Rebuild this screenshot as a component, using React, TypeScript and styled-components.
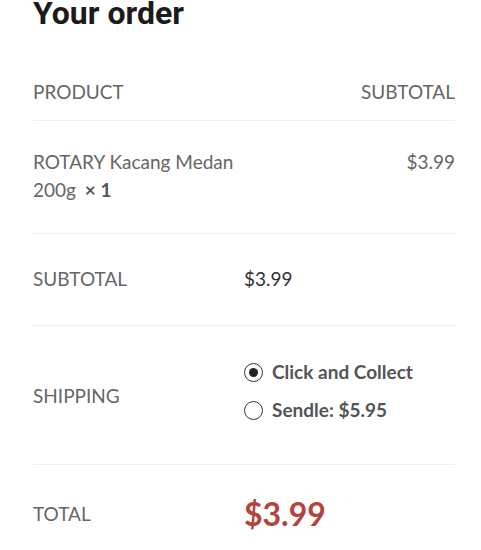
import React from "react";
import styled, { createGlobalStyle } from "styled-components";

const Global = createGlobalStyle`
  html, body { margin: 0; padding: 0; background: #ffffff; }
  body { font-family: Lato, "Noto Sans", sans-serif; overflow: hidden; }
`;

const Wrapper = styled.div`
  width: 422px;
  margin-left: 33px;
`;

const Title = styled.h3`
  margin: -6px 0 30px;
  font-family: Roboto, "Liberation Sans", sans-serif;
  font-weight: 700;
  font-size: 32px;
  line-height: 38px;
  color: #1b1b1b;
`;

const Table = styled.table`
  width: 100%;
  border-collapse: collapse;
  table-layout: fixed;
  font-size: 19px;
  line-height: 28px;
`;

const HeadCell = styled.th<{ $align?: "left" | "right" }>`
  padding: 16px 0 14px;
  text-align: ${(p) => p.$align ?? "left"};
  font-weight: 400;
  color: #666666;
  text-transform: uppercase;
  border-bottom: 1px solid #eeeeee;
`;

const Row = styled.tr`
  border-bottom: 1px solid #eeeeee;
`;

const LastRow = styled.tr``;

const ItemCell = styled.td<{ $align?: "left" | "right" }>`
  padding: 27px 0 29px;
  vertical-align: top;
  text-align: ${(p) => p.$align ?? "left"};
  color: #666666;
`;

const Qty = styled.strong`
  font-weight: 700;
  color: #555555;
  margin-left: 4px;
`;

const FootLabel = styled.th<{ $pad: string }>`
  padding: ${(p) => p.$pad};
  text-align: left;
  font-weight: 400;
  color: #666666;
  vertical-align: middle;
`;

const FootValue = styled.td<{ $pad: string }>`
  padding: ${(p) => p.$pad};
  text-align: left;
  color: #333333;
  vertical-align: middle;
`;

const Options = styled.ul`
  list-style: none;
  margin: 0;
  padding: 0;
`;

const Option = styled.li`
  display: flex;
  align-items: center;
  gap: 9px;
  margin-bottom: 10px;
  font-weight: 700;
  color: #555555;
`;

const Radio = styled.span<{ $checked?: boolean }>`
  box-sizing: border-box;
  width: 19px;
  height: 19px;
  border-radius: 50%;
  border: 1.5px solid #333333;
  display: inline-flex;
  align-items: center;
  justify-content: center;
  flex: none;
  &::after {
    content: "";
    width: 9px;
    height: 9px;
    border-radius: 50%;
    background: #222222;
    display: ${(p) => (p.$checked ? "block" : "none")};
  }
`;

const TotalAmount = styled.strong`
  font-size: 32px;
  line-height: 38px;
  font-weight: 700;
  color: #b3433d;
`;

export default function App() {
  return (
    <>
      <Global />
      <Wrapper>
        <Title>Your order</Title>
        <Table>
          <thead>
            <tr>
              <HeadCell>Product</HeadCell>
              <HeadCell $align="right">Subtotal</HeadCell>
            </tr>
          </thead>
          <tbody>
            <Row>
              <ItemCell>
                ROTARY Kacang Medan 200g <Qty>× 1</Qty>
              </ItemCell>
              <ItemCell $align="right">$3.99</ItemCell>
            </Row>
          </tbody>
          <tfoot>
            <Row>
              <FootLabel $pad="31px 0 32px">SUBTOTAL</FootLabel>
              <FootValue $pad="31px 0 32px">$3.99</FootValue>
            </Row>
            <Row>
              <FootLabel $pad="32px 0 30px">SHIPPING</FootLabel>
              <FootValue $pad="32px 0 30px">
                <Options>
                  <Option>
                    <Radio $checked />
                    Click and Collect
                  </Option>
                  <Option>
                    <Radio />
                    Sendle: $5.95
                  </Option>
                </Options>
              </FootValue>
            </Row>
            <LastRow>
              <FootLabel $pad="30px 0">TOTAL</FootLabel>
              <FootValue $pad="30px 0">
                <TotalAmount>$3.99</TotalAmount>
              </FootValue>
            </LastRow>
          </tfoot>
        </Table>
      </Wrapper>
    </>
  );
}
